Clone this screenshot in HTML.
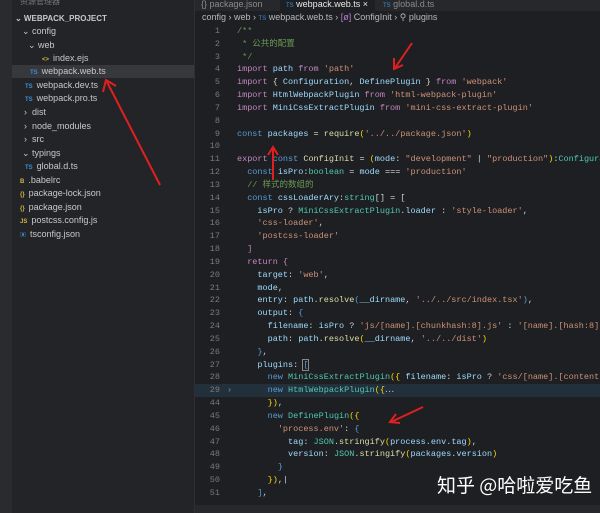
<!DOCTYPE html>
<html><head><meta charset="utf-8"><style>
*{margin:0;padding:0;box-sizing:border-box}
body{width:600px;height:513px;overflow:hidden;background:#1e1f22;position:relative;font-family:"Liberation Sans","Noto Sans CJK SC",sans-serif}
#act{position:absolute;left:0;top:0;width:12px;height:513px;background:#2a2b2e}
#side{position:absolute;left:12px;top:0;width:183px;height:513px;background:#232427;border-right:1px solid #2e2f33;overflow:hidden}
.it{position:absolute;font-size:9px;color:#c8c8c8;white-space:nowrap;height:13px;line-height:13px}
.ic{display:inline-block;font-size:6px;font-weight:bold;color:#3c8ed8;margin-right:4px}
#tabs{position:absolute;left:195px;top:0;width:405px;height:11px;background:#27282b;overflow:hidden}
.tab{position:absolute;top:0;height:11px;font-size:9px;line-height:8px;color:#8a8a8a;padding-left:6px;overflow:hidden;white-space:nowrap}
#bc{position:absolute;left:202px;top:12px;font-size:9px;color:#b8b8b8;white-space:nowrap}
#code{position:absolute;left:195px;top:25px;width:405px;height:480px;overflow:hidden;font-family:"Liberation Mono","Noto Sans CJK SC",monospace;font-size:8.5px;color:#d4d4d4}
.l{height:12.83px;line-height:12.83px;white-space:pre;position:relative}
.n{display:inline-block;width:25px;text-align:right;color:#7a7a7a;margin-right:17px}
.k{color:#c586c0}.b{color:#569cd6}.v{color:#9cdcfe}.s{color:#ce9178}.c{color:#6a9955}.t{color:#4ec9b0}.f{color:#dcdcaa}.y{color:#ffd700}
</style></head><body>
<div id="act"></div>
<div id="side">
<div class="it" style="left:8px;top:-5px;color:#777;font-size:8px">资源管理器</div>
<div class="it" style="left:3px;top:12px;font-weight:bold;font-size:8px">⌄ WEBPACK_PROJECT</div>
<div class="it" style="left:10px;top:25px">⌄ config</div>
<div class="it" style="left:16px;top:39px">⌄ web</div>
<div class="it" style="left:30px;top:52px"><span class="ic" style="color:#d4b348">&lt;&gt;</span>index.ejs</div>
<div class="it" style="left:0;top:65px;width:183px;background:#37383c;padding-left:18px"><span class="ic">TS</span>webpack.web.ts</div>
<div class="it" style="left:13px;top:79px"><span class="ic">TS</span>webpack.dev.ts</div>
<div class="it" style="left:13px;top:92px"><span class="ic">TS</span>webpack.pro.ts</div>
<div class="it" style="left:12px;top:106px">›&nbsp; dist</div>
<div class="it" style="left:12px;top:120px">›&nbsp; node_modules</div>
<div class="it" style="left:12px;top:133px">›&nbsp; src</div>
<div class="it" style="left:10px;top:147px">⌄ typings</div>
<div class="it" style="left:13px;top:160px"><span class="ic">TS</span>global.d.ts</div>
<div class="it" style="left:8px;top:174px"><span class="ic" style="color:#d4b348">B</span>.babelrc</div>
<div class="it" style="left:8px;top:187px"><span class="ic" style="color:#d4b348">{}</span>package-lock.json</div>
<div class="it" style="left:8px;top:201px"><span class="ic" style="color:#d4b348">{}</span>package.json</div>
<div class="it" style="left:8px;top:214px"><span class="ic" style="color:#d4b348">JS</span>postcss.config.js</div>
<div class="it" style="left:8px;top:228px"><span class="ic">▣</span>tsconfig.json</div>
</div>
<div id="tabs">
<div class="tab" style="left:0;width:82px">{} package.json</div>
<div class="tab" style="left:85px;width:95px;background:#1e1f22;color:#e8e8e8"><span style="color:#3c8ed8;font-size:6px">TS</span> webpack.web.ts ×</div>
<div class="tab" style="left:182px;width:75px"><span style="color:#3c8ed8;font-size:6px">TS</span> global.d.ts</div>
</div>
<div id="bc">config › web › <span style="color:#3c8ed8;font-size:6px">TS</span> webpack.web.ts › <span style="color:#b180d7">[ø]</span> ConfigInit › ⚲ plugins</div>
<div id="code">
<div class="l"><span class="n">1</span><span class="c">/**</span></div>
<div class="l"><span class="n">2</span><span class="c"> * 公共的配置</span></div>
<div class="l"><span class="n">3</span><span class="c"> */</span></div>
<div class="l"><span class="n">4</span><span class="k">import</span> <span class="v">path</span> <span class="k">from</span> <span class="s">'path'</span></div>
<div class="l"><span class="n">5</span><span class="k">import</span> { <span class="v">Configuration</span>, <span class="v">DefinePlugin</span> } <span class="k">from</span> <span class="s">'webpack'</span></div>
<div class="l"><span class="n">6</span><span class="k">import</span> <span class="v">HtmlWebpackPlugin</span> <span class="k">from</span> <span class="s">'html-webpack-plugin'</span></div>
<div class="l"><span class="n">7</span><span class="k">import</span> <span class="v">MiniCssExtractPlugin</span> <span class="k">from</span> <span class="s">'mini-css-extract-plugin'</span></div>
<div class="l"><span class="n">8</span></div>
<div class="l"><span class="n">9</span><span class="b">const</span> <span class="v">packages</span> = <span class="f">require</span><span class="y">(</span><span class="s">'../../package.json'</span><span class="y">)</span></div>
<div class="l"><span class="n">10</span></div>
<div class="l"><span class="n">11</span><span class="k">export</span> <span class="b">const</span> <span class="f">ConfigInit</span> = <span class="y">(</span><span class="v">mode</span>: <span class="s">"development"</span> | <span class="s">"production"</span><span class="y">)</span>:<span class="t">Configuration</span></div>
<div class="l"><span class="n">12</span>  <span class="b">const</span> <span class="v">isPro</span>:<span class="t">boolean</span> = <span class="v">mode</span> === <span class="s">'production'</span></div>
<div class="l"><span class="n">13</span>  <span class="c">// 样式的数组的</span></div>
<div class="l"><span class="n">14</span>  <span class="b">const</span> <span class="v">cssLoaderAry</span>:<span class="t">string</span>[] = [</div>
<div class="l"><span class="n">15</span>    <span class="v">isPro</span> ? <span class="t">MiniCssExtractPlugin</span>.<span class="v">loader</span> : <span class="s">'style-loader'</span>,</div>
<div class="l"><span class="n">16</span>    <span class="s">'css-loader'</span>,</div>
<div class="l"><span class="n">17</span>    <span class="s">'postcss-loader'</span></div>
<div class="l"><span class="n">18</span>  <span class="k">]</span></div>
<div class="l"><span class="n">19</span>  <span class="k">return</span> <span class="k">{</span></div>
<div class="l"><span class="n">20</span>    <span class="v">target</span>: <span class="s">'web'</span>,</div>
<div class="l"><span class="n">21</span>    <span class="v">mode</span>,</div>
<div class="l"><span class="n">22</span>    <span class="v">entry</span>: <span class="v">path</span>.<span class="f">resolve</span><span class="b">(</span><span class="v">__dirname</span>, <span class="s">'../../src/index.tsx'</span><span class="b">)</span>,</div>
<div class="l"><span class="n">23</span>    <span class="v">output</span>: <span class="b">{</span></div>
<div class="l"><span class="n">24</span>      <span class="v">filename</span>: <span class="v">isPro</span> ? <span class="s">'js/[name].[chunkhash:8].js'</span> : <span class="s">'[name].[hash:8].js'</span></div>
<div class="l"><span class="n">25</span>      <span class="v">path</span>: <span class="v">path</span>.<span class="f">resolve</span><span class="y">(</span><span class="v">__dirname</span>, <span class="s">'../../dist'</span><span class="y">)</span></div>
<div class="l"><span class="n">26</span>    <span class="b">}</span>,</div>
<div class="l"><span class="n">27</span>    <span class="v">plugins</span>: <span class="b" style="outline:1px solid #888">[</span></div>
<div class="l"><span class="n">28</span>      <span class="b">new</span> <span class="t">MiniCssExtractPlugin</span><span class="y">({</span> <span class="v">filename</span>: <span class="v">isPro</span> ? <span class="s">'css/[name].[contenthash:8].css'</span></div>
<div class="l" style="background:#22303c"><span class="n">29</span><span style="position:absolute;left:32px;color:#888">›</span>      <span class="b">new</span> <span class="t">HtmlWebpackPlugin</span><span class="y">({</span>⋯</div>
<div class="l"><span class="n">44</span>      <span class="y">})</span>,</div>
<div class="l"><span class="n">45</span>      <span class="b">new</span> <span class="t">DefinePlugin</span><span class="y">({</span></div>
<div class="l"><span class="n">46</span>        <span class="s">'process.env'</span>: <span class="b">{</span></div>
<div class="l"><span class="n">47</span>          <span class="v">tag</span>: <span class="t">JSON</span>.<span class="f">stringify</span><span class="y">(</span><span class="v">process</span>.<span class="v">env</span>.<span class="v">tag</span><span class="y">)</span>,</div>
<div class="l"><span class="n">48</span>          <span class="v">version</span>: <span class="t">JSON</span>.<span class="f">stringify</span><span class="y">(</span><span class="v">packages</span>.<span class="v">version</span><span class="y">)</span></div>
<div class="l"><span class="n">49</span>        <span class="b">}</span></div>
<div class="l"><span class="n">50</span>      <span class="y">})</span>,|</div>
<div class="l"><span class="n">51</span>    <span class="b">]</span>,</div>
</div>
<div style="position:absolute;left:195px;top:505px;width:405px;height:8px;background:#27282b"></div>
<div style="position:absolute;left:437px;top:471px;font-size:19px;color:#fff;font-family:'Noto Sans CJK SC',sans-serif;white-space:nowrap">知乎 @哈啦爱吃鱼</div>
<svg width="600" height="513" style="position:absolute;left:0;top:0" fill="none" stroke="#e02020" stroke-width="2">
<line x1="160" y1="185" x2="107" y2="82"/><polyline points="103,92 106,80 116,86"/>
<line x1="412" y1="43" x2="395" y2="68"/><polyline points="394,58 394,69 403,65"/>
<line x1="273" y1="180" x2="273" y2="148"/><polyline points="268,155 273,147 278,155"/>
<line x1="423" y1="407" x2="391" y2="422"/><polyline points="396,414 390,422 400,423"/>
</svg>
</body></html>
